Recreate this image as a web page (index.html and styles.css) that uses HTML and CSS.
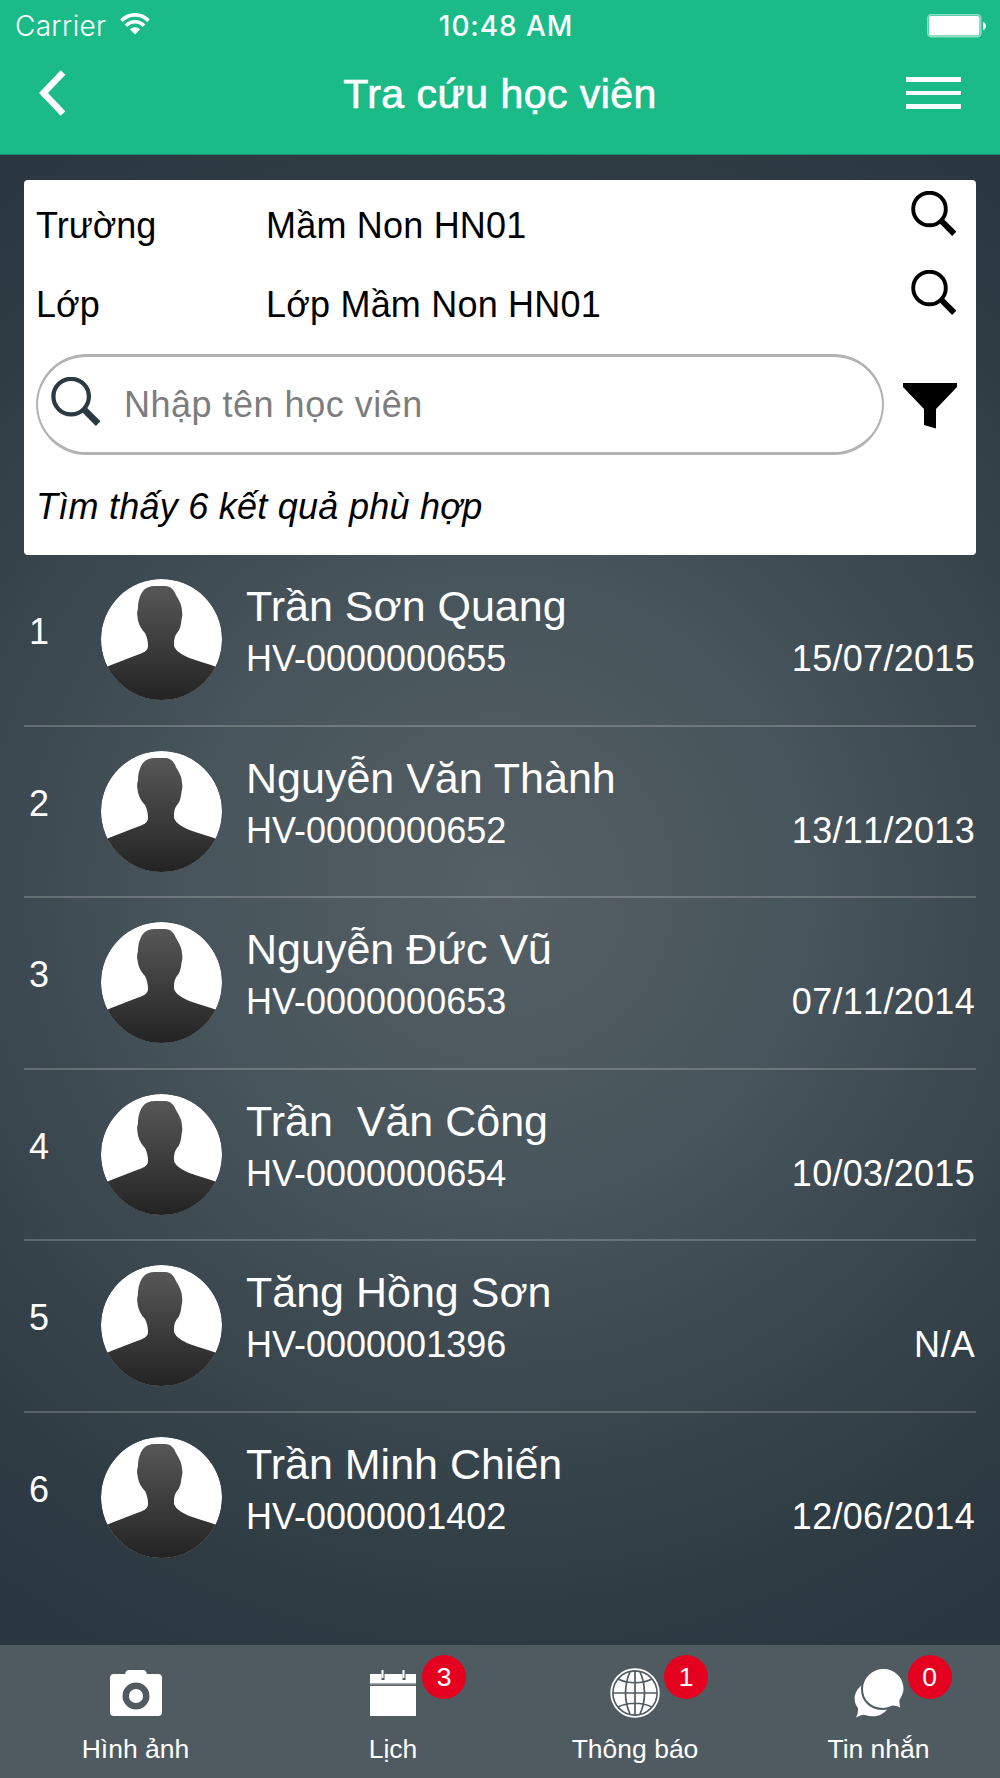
FILE: index.html
```html
<!DOCTYPE html>
<html lang="vi">
<head>
	<meta charset="utf-8">
	<title>Tra cứu học viên</title>
	<link rel="stylesheet" href="styles.css">
</head>
<body>
	<svg class="defs" width="0" height="0">
		<linearGradient id="shade" x1="0" y1="0" x2="0" y2="1">
			<stop offset="0" stop-color="#575757"/>
			<stop offset="1" stop-color="#232323"/>
		</linearGradient>
		<clipPath id="round"><circle cx="60.5" cy="60.5" r="60.5"/></clipPath>
		<symbol id="search" viewBox="0 0 45 45">
			<circle cx="18.500" cy="18" r="16.300" fill="none" stroke="currentColor" stroke-width="3.900"/>
			<path d="M29 28.500L43.300 42.800" stroke="currentColor" stroke-width="6"/>
		</symbol>
		<symbol id="avatar" viewBox="0 0 121 121">
			<g clip-path="url(#round)">
				<circle cx="60.5" cy="60.5" r="60.5" fill="#fff"/>
				<path d="M54 7H64C70 7 73 11 75 16C78 21 81 26 81 32Q82 36 80.500 41C80 46 79 51 76 54C73 58 73 62 73 67C75 72 80 75 86 78C96 82 106 84 118 89V121H3V89C14 84 26 80 36 76C42 74 47 72 47 67C47 62 46 58 44 54C39 49 37 43 36.500 38Q35.500 34 37 29C37 22 39 16 42 12Q46 7 54 7Z" fill="url(#shade)"/>
			</g>
		</symbol>
	</svg>

	<div class="header">
		<div class="status">
			<div class="carrier">
				<span>Carrier</span>
				<svg width="30" height="22" viewBox="0 0 30 22" fill="none" stroke="#fff" stroke-width="3.6">
					<path d="M1.500 7.800C9 -.100 21 -.100 28.500 7.800"/>
					<path d="M6 12.800C11 7.400 19 7.400 24 12.800"/>
					<path d="M15 21.500L10 16.400C13 13.600 17 13.600 20 16.400Z" fill="#fff" stroke="none"/>
				</svg>
			</div>
			<span class="time">10:48 AM</span>
			<svg class="battery" width="60" height="24" viewBox="0 0 60 24">
				<rect x=".8" y=".8" width="53" height="22" rx="3.500" fill="none" stroke="#8fdfc4" stroke-width="1.500"/>
				<rect x="2" y="2" width="50.500" height="19.600" rx="2" fill="#fff"/>
				<path d="M56 8C60 9 60 15 56 16Z" fill="#fff"/>
			</svg>
		</div>
		<div class="nav">
			<svg width="28" height="46" viewBox="0 0 28 46" fill="none" stroke="#fff" stroke-width="6.500">
				<path d="M24 2.500L4.500 23L24 43.500"/>
			</svg>
			<h1 class="title">Tra cứu học viên</h1>
			<div class="menu"><i></i><i></i><i></i></div>
		</div>
	</div>

	<div class="card">
		<div class="field">
			<span class="label">Trường</span>
			<span class="value">Mầm Non HN01</span>
			<svg class="find"><use href="#search"/></svg>
		</div>
		<div class="field">
			<span class="label">Lớp</span>
			<span class="value">Lớp Mầm Non HN01</span>
			<svg class="find"><use href="#search"/></svg>
		</div>
		<div class="filter">
			<div class="searchbox">
				<svg class="find"><use href="#search"/></svg>
				<span class="hint">Nhập tên học viên</span>
			</div>
			<svg class="funnel" width="54" height="46" viewBox="0 0 54 46">
				<path d="M0 0H54V4L33 26V45.500L21 42V26L0 4Z"/>
			</svg>
		</div>
		<p class="result">Tìm thấy 6 kết quả phù hợp</p>
	</div>

	<div class="list">
		<div class="student">
			<span class="num">1</span>
			<svg class="avatar"><use href="#avatar"/></svg>
			<div class="info">
				<div class="name">Trần Sơn Quang</div>
				<div class="code"><span>HV-0000000655</span><span class="date">15/07/2015</span></div>
			</div>
		</div>
		<div class="student">
			<span class="num">2</span>
			<svg class="avatar"><use href="#avatar"/></svg>
			<div class="info">
				<div class="name">Nguyễn Văn Thành</div>
				<div class="code"><span>HV-0000000652</span><span class="date">13/11/2013</span></div>
			</div>
		</div>
		<div class="student">
			<span class="num">3</span>
			<svg class="avatar"><use href="#avatar"/></svg>
			<div class="info">
				<div class="name">Nguyễn Đức Vũ</div>
				<div class="code"><span>HV-0000000653</span><span class="date">07/11/2014</span></div>
			</div>
		</div>
		<div class="student">
			<span class="num">4</span>
			<svg class="avatar"><use href="#avatar"/></svg>
			<div class="info">
				<div class="name">Trần  Văn Công</div>
				<div class="code"><span>HV-0000000654</span><span class="date">10/03/2015</span></div>
			</div>
		</div>
		<div class="student">
			<span class="num">5</span>
			<svg class="avatar"><use href="#avatar"/></svg>
			<div class="info">
				<div class="name">Tăng Hồng Sơn</div>
				<div class="code"><span>HV-0000001396</span><span class="date">N/A</span></div>
			</div>
		</div>
		<div class="student">
			<span class="num">6</span>
			<svg class="avatar"><use href="#avatar"/></svg>
			<div class="info">
				<div class="name">Trần Minh Chiến</div>
				<div class="code"><span>HV-0000001402</span><span class="date">12/06/2014</span></div>
			</div>
		</div>
	</div>

	<div class="tabs">
		<div class="tab">
			<svg width="54" height="50" viewBox="0 0 54 50">
				<path d="M5 6H16Q17 2 20 2H34Q37 2 38 6H49Q53 6 53 10V44Q53 48 49 48H5Q1 48 1 44V10Q1 6 5 6Z" fill="#fff"/>
				<circle cx="27" cy="28" r="10.300" fill="#fff" stroke="#505b61" stroke-width="6.400"/>
			</svg>
			<span>Hình ảnh</span>
		</div>
		<div class="tab">
			<svg width="50" height="50" viewBox="0 0 50 50">
				<path d="M2 6H48V15.500H2ZM2 18H48V48H2Z" fill="#fff"/>
				<path d="M2 16.800H48" stroke="#8a9296"/>
				<path d="M15 6V12M36 6V12" stroke="#505b61" stroke-width="3"/>
				<path d="M14.500 2V10M35.500 2V10" stroke="#fff" stroke-width="2"/>
			</svg>
			<span>Lịch</span>
			<b class="badge">3</b>
		</div>
		<div class="tab">
			<svg width="50" height="50" viewBox="0 0 50 50">
				<circle cx="25" cy="25" r="23.800" fill="none" stroke="#fff" stroke-width="1.800"/>
				<circle cx="25" cy="25" r="21.300" fill="#fff"/>
				<path d="M25 3V47M3 25H47M20 4C14 17 14 33 20 46M30 4C36 17 36 33 30 46M8 11C18 16 32 16 42 11M8 39C18 34 32 34 42 39" fill="none" stroke="#505b61" stroke-width="1.700"/>
			</svg>
			<span>Thông báo</span>
			<b class="badge">1</b>
		</div>
		<div class="tab">
			<svg width="50" height="50" viewBox="0 0 50 50">
				<path d="M8 17C-1 24 -1 34 4 40Q4.500 45 2 49.500Q8 46 11 47C20 50 29 48 34 40Z" fill="#fff"/>
				<path d="M29.500 0C18 0 8 9 8 21C8 34 18 41 29 41C33 41 36 40 39 38.500Q43 38.500 48 41.500Q46 36 46.500 32C49 28 50.500 25 50.500 21C50.500 9 41 0 29.500 0Z" fill="#fff" stroke="#505b61" stroke-width="2"/>
			</svg>
			<span>Tin nhắn</span>
			<b class="badge">0</b>
		</div>
	</div>
</body>
</html>
```

FILE: styles.css
```css
* {
	box-sizing: border-box;
}
body {
	margin: 0;
	width: 1000px;
	height: 1778px;
	display: flex;
	flex-direction: column;
	overflow: hidden;
	font-family: "Liberation Sans", Arial, sans-serif;
	font-size: 36px;
	color: #fff;
	background: radial-gradient(circle at 500px 890px, #556065 0, #47545b 320px, #3b484f 500px, #303c44 720px, #2a3640 900px);
}
svg {
	display: block;
	flex: none;
}
.defs {
	position: absolute;
}

/* header */
.header {
	height: 155px;
	background: #1abb87;
	border-bottom: 1px solid #19906c;
}
.status {
	height: 51px;
	padding: 0 13px 0 15px;
	display: grid;
	grid-template-columns: 1fr auto 1fr;
	align-items: center;
	font-family: Inter, sans-serif;
	font-size: 28px;
}
.carrier {
	display: flex;
	align-items: center;
	gap: 14px;
	font-weight: 350;
	letter-spacing: 0.3px;
}
.carrier svg {
	margin-top: -3px;
}
.time {
	padding-left: 10px;
	font-weight: 500;
	letter-spacing: 0.9px;
}
.battery {
	justify-self: end;
}
.nav {
	height: 84px;
	padding: 0 39px;
	display: grid;
	grid-template-columns: 1fr auto 1fr;
	align-items: center;
}
.title {
	margin: 2px 0 0;
	font-size: 41px;
	font-weight: normal;
	letter-spacing: 0.45px;
	-webkit-text-stroke: 0.7px #fff;
}
.menu {
	justify-self: end;
	width: 55px;
	display: flex;
	flex-direction: column;
	gap: 9px;
}
.menu i {
	height: 4.5px;
	background: #fff;
}

/* search card */
.card {
	margin: 25px 24px 0;
	height: 375px;
	padding: 7px 0 0 12px;
	border-radius: 4px;
	background: #fff;
	color: #000;
}
.field {
	height: 79px;
	line-height: 77px;
	display: flex;
	padding-right: 20px;
}
.label {
	width: 230px;
}
.value {
	flex: 1;
	letter-spacing: 0.2px;
}
.find {
	width: 45px;
	height: 45px;
	margin-top: 4px;
}
.filter {
	margin-top: 9px;
	display: flex;
	align-items: center;
	gap: 19px;
}
.searchbox {
	width: 848px;
	height: 101px;
	padding-left: 13px;
	display: flex;
	align-items: center;
	gap: 24px;
	border: solid #b2b2b2;
	border-width: 3px 2px;
	border-radius: 51px;
}
.searchbox .find {
	width: 49px;
	height: 49px;
	margin-top: -6px;
	color: #2b3a42;
}
.hint {
	color: #7d7d7d;
	letter-spacing: 0.5px;
}
.funnel {
	margin-top: 2px;
}
.result {
	margin: 12px 0 0;
	line-height: 79px;
	font-style: italic;
	letter-spacing: 0.25px;
}

/* students */
.list {
	padding: 0 24px;
	flex: 1;
}
.student {
	height: 171.5px;
	display: flex;
	padding-top: 24px;
	border-bottom: 2px solid rgba(255, 255, 255, 0.2);
}
.student:last-child {
	border-bottom: none;
}
.num {
	width: 77px;
	padding: 32px 0 0 5px;
}
.avatar {
	width: 121px;
	height: 121px;
}
.info {
	flex: 1;
	padding-left: 24px;
}
.name {
	font-size: 43px;
	line-height: 54px;
	white-space: pre;
}
.code {
	display: flex;
	justify-content: space-between;
	line-height: 52px;
}
.date {
	padding-right: 1px;
	font-kerning: none;
	letter-spacing: 0.3px;
}

/* bottom tabs */
.tabs {
	height: 133px;
	display: grid;
	grid-template-columns: 271px 244px 240px 247px;
	background: #505b61;
	font-size: 26.5px;
}
.tab {
	position: relative;
	padding-top: 23px;
	display: flex;
	flex-direction: column;
	align-items: center;
	gap: 16px;
}
.badge {
	position: absolute;
	top: 10px;
	left: calc(50% + 29px);
	width: 44px;
	height: 44px;
	border-radius: 50%;
	background: #e6001f;
	font-weight: normal;
	line-height: 44px;
	text-align: center;
}
```
